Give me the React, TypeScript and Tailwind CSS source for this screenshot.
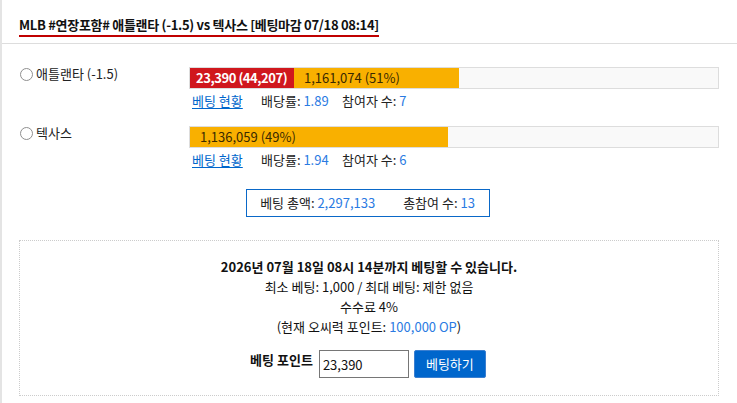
import React from "react";

const font = { fontFamily: '"Noto Sans CJK KR", "Noto Sans", sans-serif' };

type Team = {
  name: string;
  segments: { label: string; width: string; tone: "red" | "orange" }[];
  odds: string;
  people: number;
};

const teams: Team[] = [
  {
    name: "애틀랜타 (-1.5)",
    segments: [
      { label: "23,390 (44,207)", width: "w-[104px]", tone: "red" },
      { label: "1,161,074 (51%)", width: "w-[165px]", tone: "orange" },
    ],
    odds: "1.89",
    people: 7,
  },
  {
    name: "텍사스",
    segments: [{ label: "1,136,059 (49%)", width: "w-[258px]", tone: "orange" }],
    odds: "1.94",
    people: 6,
  },
];

const TeamRow = ({ team }: { team: Team }) => {
  return (
    <div className="flex">
      <label className="w-[170px] shrink-0 flex items-center gap-[3px] h-[16px] mt-[-1px] pl-px text-[13px] text-[#222]">
        <span className="w-[13px] h-[13px] rounded-full border border-[#8f8f8f] bg-white shrink-0" />
        <span>{team.name}</span>
      </label>
      <div className="flex-1">
        <div className="h-[22px] border border-[#dddddd] bg-[#f9f9f9] flex">
          {team.segments.map((s) => (
            <div
              key={s.label}
              className={`${s.width} h-full flex items-center text-[13px] whitespace-nowrap overflow-hidden ${
                s.tone === "red"
                  ? "bg-[#d0171d] text-white font-bold pl-[6px] tracking-[-0.45px]"
                  : "bg-[#f9b000] text-[#3a2a00] pl-[10px]"
              }`}
            >
              {s.label}
            </div>
          ))}
        </div>
        <div className="flex items-center h-[24px] pl-[3px] text-[13px] text-[#222]">
          <a href="#" className="text-[#0066cc] underline underline-offset-2 w-[69px]">
            베팅 현황
          </a>
          <span className="w-[81px]">
            배당률: <span className="text-[#2a7ae2]">{team.odds}</span>
          </span>
          <span>
            참여자 수: <span className="text-[#2a7ae2]">{team.people}</span>
          </span>
        </div>
      </div>
    </div>
  );
};

const App = () => {
  return (
    <div style={font} className="w-[737px] h-[403px] bg-white border-l-2 border-[#e4e4e4] overflow-hidden">
      <div className="pl-[17px] pt-[11px] h-[44px] border-b border-[#dddddd]">
        <h3 className="inline-block text-[13px] font-bold text-[#111] leading-[18px] pb-[1px] tracking-[-0.3px] border-b-2 border-[#c00000]">
          MLB #연장포함# 애틀랜타 (-1.5) vs 텍사스 [베팅마감 07/18 08:14]
        </h3>
      </div>
      <div className="pl-[17px] pr-[18px]">
        <div className="pt-[23px] space-y-[13px]">
          {teams.map((t) => (
            <TeamRow key={t.name} team={t} />
          ))}
        </div>
        <div className="flex justify-center mt-[17px]">
          <div className="w-[244px] h-[28px] border border-[#0a68c8] flex items-center justify-center gap-[28px] text-[13px] text-[#222] ml-[-3px]">
            <span>
              베팅 총액: <span className="text-[#2a7ae2]">2,297,133</span>
            </span>
            <span>
              총참여 수: <span className="text-[#2a7ae2]">13</span>
            </span>
          </div>
        </div>
        <div className="mt-[23px] border border-dotted border-[#cccccc] h-[156px] pt-[16px] flex flex-col items-center text-[13px] text-[#111]">
          <p className="font-bold leading-[20px]">2026년 07월 18일 08시 14분까지 베팅할 수 있습니다.</p>
          <p className="leading-[20px]">최소 베팅: 1,000 / 최대 베팅: 제한 없음</p>
          <p className="leading-[20px]">수수료 4%</p>
          <p className="leading-[20px]">
            (현재 오씨력 포인트: <span className="text-[#2a7ae2]">100,000 OP</span>)
          </p>
          <div className="flex items-center gap-[5px] mt-[13px] ml-[-2px]">
            <span className="font-bold text-[13px] mr-[1px] mt-[-8px]">베팅 포인트</span>
            <input
              defaultValue="23,390"
              className="w-[90px] h-[28px] border border-[#767676] px-[3px] text-[13px] text-[#111] outline-none"
              style={font}
            />
            <button
              className="w-[72px] h-[28px] bg-[#0066cc] text-white text-[13px] rounded-[2px] border border-[#3b7fd0]"
              style={font}
            >
              베팅하기
            </button>
          </div>
        </div>
      </div>
    </div>
  );
};

export default App;
